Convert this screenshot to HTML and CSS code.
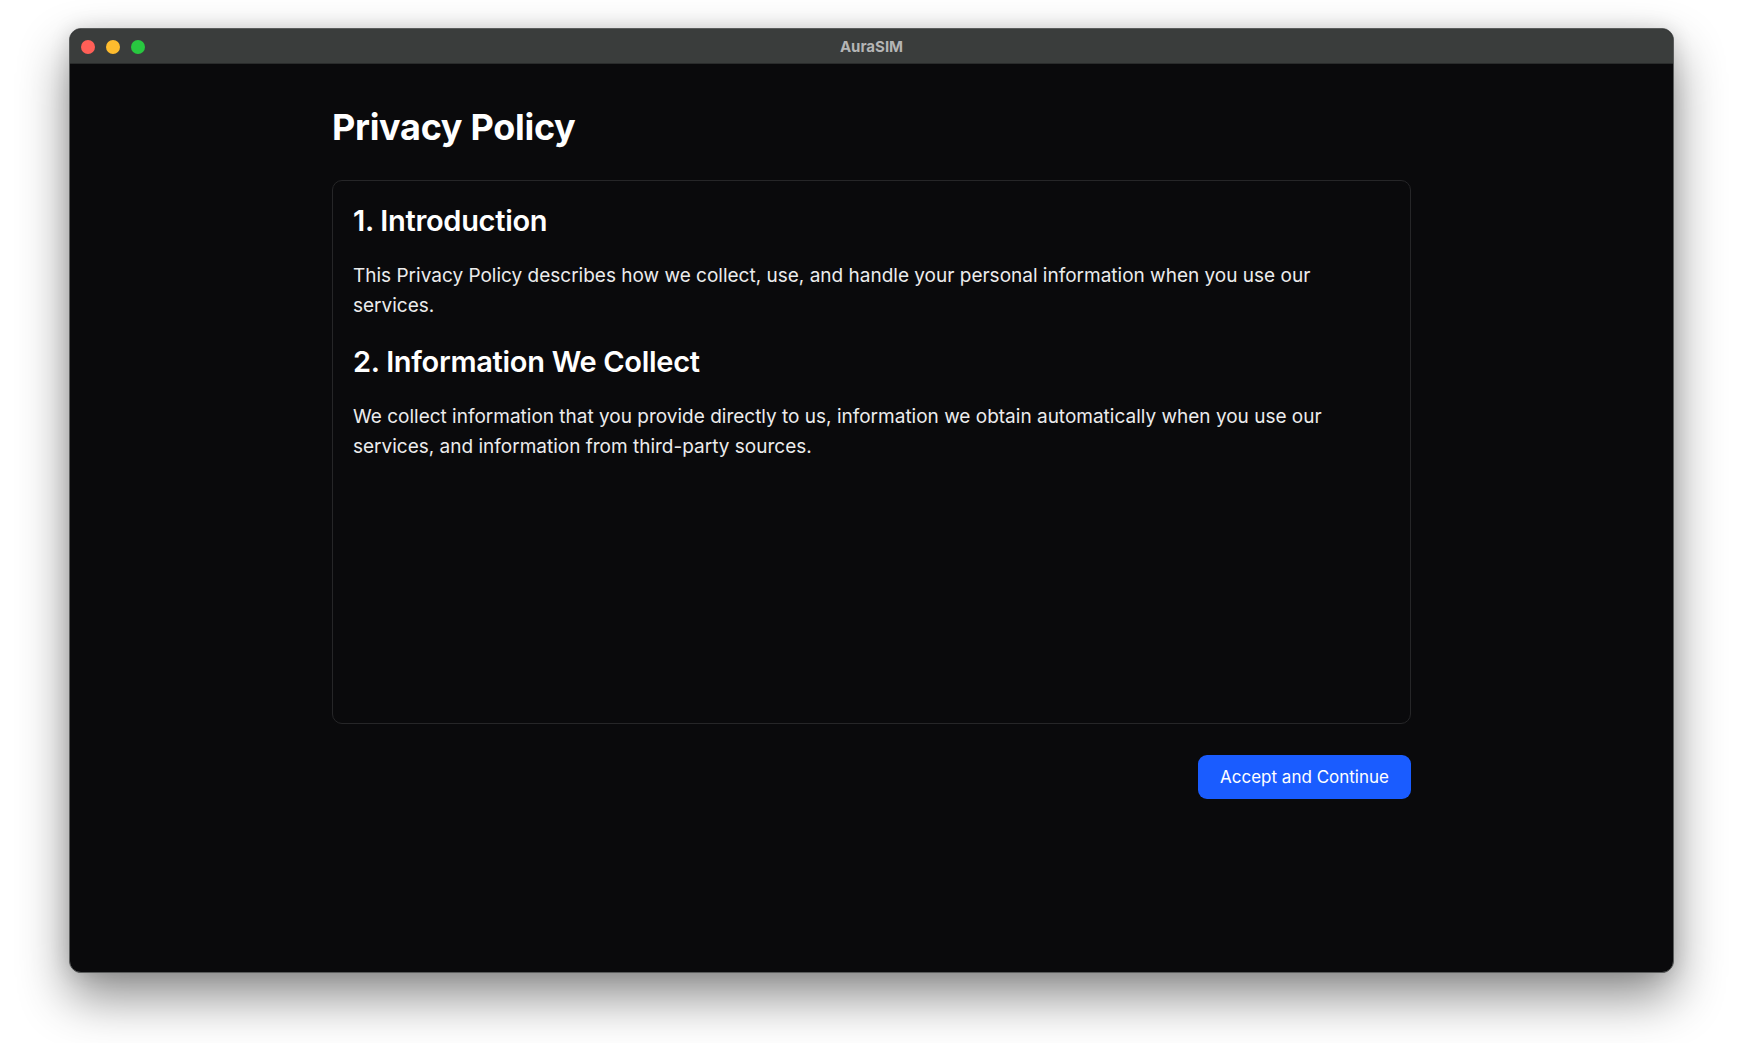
FILE: index.html
```html
<!DOCTYPE html>
<html lang="en">
<head>
    <meta charset="UTF-8">
    <meta name="viewport" content="width=device-width, initial-scale=1.0">
    <title>AuraSIM</title>
    <link rel="stylesheet" href="styles.css">
</head>
<body>
    <div class="window">
        <div class="titlebar">
            <div class="lights">
                <span class="light red"></span>
                <span class="light yellow"></span>
                <span class="light green"></span>
            </div>
            <div class="window-title">AuraSIM</div>
        </div>
        <main class="content">
            <h1 class="page-title">Privacy Policy</h1>
            <section class="policy-box">
                <h2 class="policy-heading">1. Introduction</h2>
                <p class="policy-text">This Privacy Policy describes how we collect, use, and handle your personal information when you use our services.</p>
                <h2 class="policy-heading">2. Information We Collect</h2>
                <p class="policy-text">We collect information that you provide directly to us, information we obtain automatically when you use our services, and information from third-party sources.</p>
            </section>
            <div class="actions">
                <button class="accept-button">Accept and Continue</button>
            </div>
        </main>
    </div>
</body>
</html>
```

FILE: styles.css
```css
html, body {
    margin: 0;
    padding: 0;
    background-color: #ffffff;
}

body {
    font-family: Inter, "Noto Sans", sans-serif;
    padding: 28px 70px 0 69px;
    height: 1043px;
    box-sizing: border-box;
    overflow: hidden;
}

.window {
    height: 943px;
    display: flex;
    flex-direction: column;
    background-color: #0a0a0c;
    border: 1px solid #5a5c5c;
    border-radius: 12px;
    overflow: hidden;
    box-shadow: 0 24px 50px rgba(0, 0, 0, 0.45), 0 0 20px rgba(0, 0, 0, 0.12);
}

.titlebar {
    position: relative;
    height: 34px;
    flex-shrink: 0;
    display: flex;
    align-items: center;
    justify-content: center;
    background-color: #3a3d3c;
    border-bottom: 1px solid #2a2c2c;
}

.lights {
    position: absolute;
    left: 11px;
    top: 11px;
    display: flex;
    gap: 11px;
}

.light {
    width: 14px;
    height: 14px;
    border-radius: 50%;
}

.red { background-color: #ff5f57; }
.yellow { background-color: #febc2e; }
.green { background-color: #28c840; }

.window-title {
    color: #b4b5b5;
    font-size: 15px;
    font-weight: 700;
}

.content {
    width: 1079px;
    margin: 0 auto;
    padding-top: 40px;
}

.page-title {
    margin: 0 0 30px 0;
    color: #ffffff;
    font-size: 36px;
    font-weight: 700;
    line-height: 46px;
    letter-spacing: -0.3px;
}

.policy-box {
    height: 544px;
    box-sizing: border-box;
    border: 1px solid #262628;
    border-radius: 10px;
    padding: 22px 20px;
}

.policy-heading {
    margin: 0 0 22px 0;
    color: #ffffff;
    font-size: 29px;
    font-weight: 600;
    line-height: 36px;
    letter-spacing: -0.3px;
}

.policy-text {
    margin: 0 0 23px 0;
    color: #ececec;
    font-size: 19px;
    line-height: 30px;
}

.actions {
    display: flex;
    justify-content: flex-end;
    margin-top: 31px;
}

.accept-button {
    width: 213px;
    height: 44px;
    border: none;
    border-radius: 9px;
    background-color: #1a5cff;
    color: #ffffff;
    font-family: Inter, "Noto Sans", sans-serif;
    font-size: 17px;
    cursor: pointer;
}
```
